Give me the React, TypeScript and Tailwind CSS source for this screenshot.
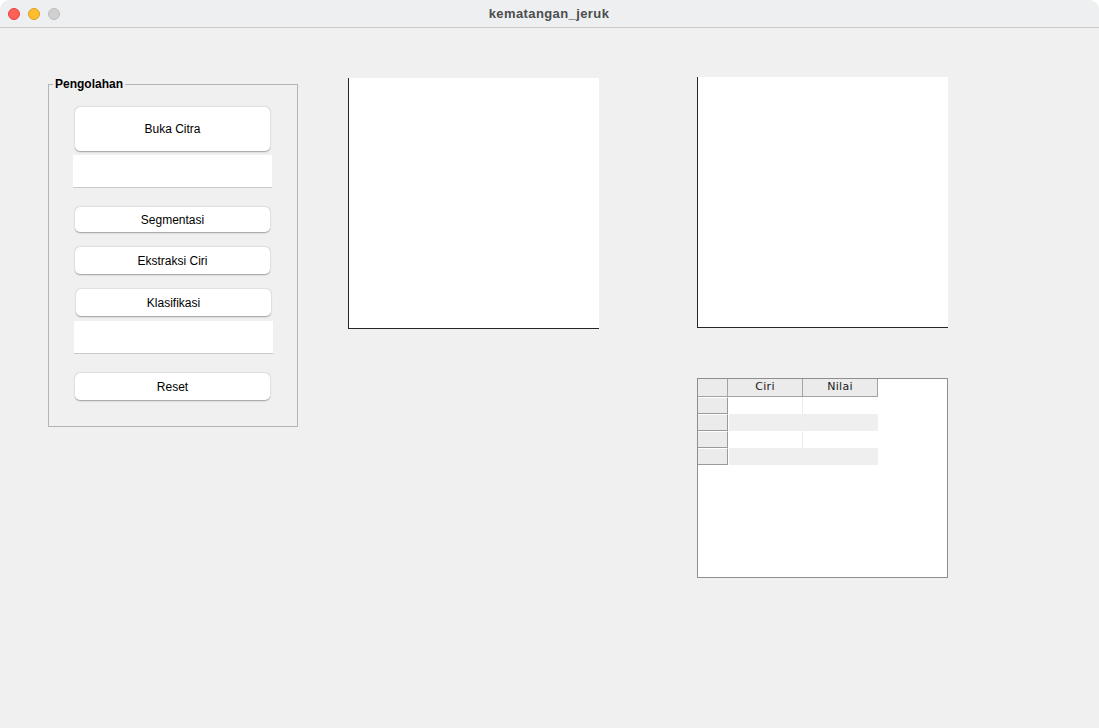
import React from "react";

const btn =
  "flex items-center justify-center bg-white rounded-[5px] shadow-[0_0.5px_1.5px_rgba(0,0,0,0.35)] text-[12px] text-black";

function Panel() {
  return (
    <div className="relative mt-[56px] w-[250px] h-[343px] border border-[#b4b4b4] flex flex-col">
      <span className="absolute -top-[8px] left-[4px] bg-[#f0f0f0] px-[2px] text-[12px] leading-[14px] font-bold text-black">
        Pengolahan
      </span>
      <button className={`${btn} ml-[26px] mt-[22px] w-[195px] h-[44px]`}>Buka Citra</button>
      <div className="ml-[24px] mt-[4px] w-[199px] h-[33px] bg-white border-b border-[#c8c8c8]" />
      <button className={`${btn} ml-[26px] mt-[19px] w-[195px] h-[25px]`}>Segmentasi</button>
      <button className={`${btn} ml-[26px] mt-[15px] w-[195px] h-[27px]`}>Ekstraksi Ciri</button>
      <button className={`${btn} ml-[27px] mt-[15px] w-[195px] h-[27px]`}>Klasifikasi</button>
      <div className="ml-[25px] mt-[5px] w-[199px] h-[33px] bg-white border-b border-[#c8c8c8]" />
      <button className={`${btn} ml-[26px] mt-[19px] w-[195px] h-[27px]`}>Reset</button>
    </div>
  );
}

function Axes({ className = "" }: { className?: string }) {
  return <div className={`w-[251px] h-[251px] bg-white border-l border-b border-[#262626] ${className}`} />;
}

function Table() {
  const rows = [0, 1, 2, 3];
  return (
    <div className="mt-[50px] w-[251px] h-[200px] bg-white border border-[#8e8e8e] font-['DejaVu_Sans',sans-serif]">
      <div className="grid grid-cols-[30px_75px_75px] w-[180px]">
        <div className="h-[18px] bg-[#ebebeb] border-r border-b border-[#a3a3a3]" />
        <div className="h-[18px] bg-[#ebebeb] border-r border-b border-[#a3a3a3] flex items-center justify-center text-[11px] tracking-[0.3px] text-[#1a1a1a]">
          Ciri
        </div>
        <div className="h-[18px] bg-[#ebebeb] border-r border-b border-[#a3a3a3] flex items-center justify-center text-[11px] tracking-[0.3px] text-[#1a1a1a]">
          Nilai
        </div>
        {rows.map((r) => (
          <React.Fragment key={r}>
            <div className="h-[17px] bg-[#ebebeb] border-t border-t-white border-r border-b border-[#9a9a9a]" />
            <div className={`h-[17px] border-l border-l-white border-r ${r % 2 ? "bg-[#efefef] border-r-[#efefef]" : "bg-white border-r-[#ececec]"}`} />
            <div className={`h-[17px] ${r % 2 ? "bg-[#efefef]" : "bg-white"}`} />
          </React.Fragment>
        ))}
      </div>
    </div>
  );
}

export default function App() {
  return (
    <div className="w-[1099px] h-[728px] bg-white font-['Liberation_Sans',Arial,sans-serif]">
      <div className="w-full h-full flex flex-col rounded-t-[10px] overflow-hidden bg-[#f0f0f0]">
        <div className="h-[28px] shrink-0 bg-[#edeff0] border-b border-[#c9c9c9] flex items-center relative">
          <div className="flex gap-[8px] pl-[8px]">
            <span className="w-[12px] h-[12px] rounded-full bg-[#fe5f57] border border-[#e2463f]" />
            <span className="w-[12px] h-[12px] rounded-full bg-[#febc2e] border border-[#dea123]" />
            <span className="w-[12px] h-[12px] rounded-full bg-[#d0d0d0] border border-[#bdbdbd]" />
          </div>
          <span className="absolute inset-x-0 -ml-[1px] text-center text-[13px] tracking-[0.4px] font-bold text-[#4d4d4d]">
            kematangan_jeruk
          </span>
        </div>
        <div className="flex pl-[48px]">
          <Panel />
          <Axes className="ml-[50px] mt-[50px]" />
          <div className="ml-[98px] mt-[49px] flex flex-col">
            <Axes />
            <Table />
          </div>
        </div>
      </div>
    </div>
  );
}
